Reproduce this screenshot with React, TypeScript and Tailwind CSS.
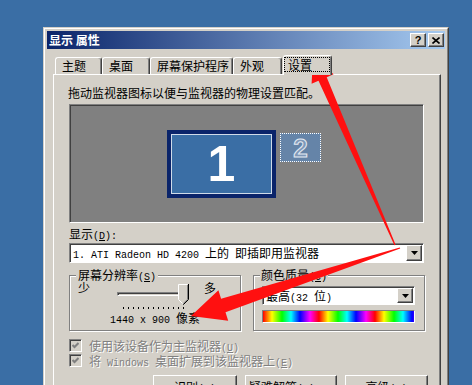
import type { ReactNode } from 'react';

const raised =
  'border border-t-white border-l-white border-r-[#404040] border-b-[#404040] shadow-[inset_-1px_-1px_0_#808080]';
const sunken =
  'border border-t-[#808080] border-l-[#808080] border-r-white border-b-white shadow-[inset_1px_1px_0_#404040]';
const etched =
  'border border-[#808080] shadow-[1px_1px_0_#fff,inset_1px_1px_0_#fff]';
const mono = "font-['Liberation_Mono',monospace] text-[10px] leading-[0]";
const disabledText = 'text-[#808080] [text-shadow:1px_1px_0_#fff]';

function L({ children }: { children: ReactNode }) {
  return <span className={mono}>{children}</span>;
}

function DownArrow() {
  return (
    <svg width="7" height="4" viewBox="0 0 7 4">
      <polygon points="0,0 7,0 3.5,4" fill="#000" />
    </svg>
  );
}

function Combo({
  className,
  children,
}: {
  className: string;
  children: ReactNode;
}) {
  return (
    <div className={`flex bg-white p-px ${sunken} ${className}`}>
      <div className="flex flex-1 items-center overflow-hidden whitespace-nowrap pl-[2px] leading-[12px]">
        <span>{children}</span>
      </div>
      <div
        className={`flex w-[16px] shrink-0 items-center justify-center bg-[#d4d0c8] ${raised}`}
      >
        <DownArrow />
      </div>
    </div>
  );
}

function Check({ children }: { children: ReactNode }) {
  return (
    <div className="flex h-[13px] items-center">
      <div
        className={`flex h-[13px] w-[13px] items-center justify-center bg-[#d4d0c8] ${sunken}`}
      >
        <svg width="7" height="7" viewBox="0 0 7 7">
          <polyline
            points="0.5,3 2.5,5 6.5,1"
            fill="none"
            stroke="#808080"
            strokeWidth="2"
          />
        </svg>
      </div>
      <span className={`ml-[7px] whitespace-nowrap leading-[12px] ${disabledText}`}>
        {children}
      </span>
    </div>
  );
}

function Button({ className, children }: { className: string; children: ReactNode }) {
  return (
    <div
      className={`flex h-[23px] items-center justify-center whitespace-nowrap bg-[#d4d0c8] leading-[12px] ${raised} ${className}`}
    >
      <span>{children}</span>
    </div>
  );
}

function Thumb() {
  return (
    <svg width="11" height="21" viewBox="0 0 11 21">
      <polygon points="0,0 10,0 10,15 5,20 0,15" fill="#d4d0c8" />
      <polyline points="0.5,15.5 0.5,0.5 9.5,0.5" fill="none" stroke="#fff" />
      <polyline points="0.5,15.5 5,20" fill="none" stroke="#fff" />
      <polyline points="9.5,1 9.5,15.3 5,19.8" fill="none" stroke="#808080" />
      <polyline points="10.5,0 10.5,15.5 5.3,20.7" fill="none" stroke="#000" />
    </svg>
  );
}

export default function App() {
  const tab =
    'flex h-[17px] items-center pl-[6px] rounded-t-[3px] border-t border-l border-r border-t-white border-l-white border-r-[#404040] shadow-[inset_-1px_0_0_#808080]';

  return (
    <div className="relative h-[385px] w-[472px] overflow-hidden bg-[#3a6ea5] font-['Noto_Sans_CJK_SC',sans-serif] text-[12px] leading-[12px] text-black">
      {/* window */}
      <div className="ml-[43px] mt-[27px] w-[406px] border border-t-[#d4d0c8] border-l-[#d4d0c8] border-r-[#404040] border-b-[#404040] bg-[#d4d0c8]">
        <div className="border border-t-white border-l-white border-r-[#808080] border-b-[#808080] p-[2px]">
          <div className="flex h-[18px] items-center justify-between bg-[linear-gradient(90deg,#0a246a,#a6caf0)] pl-[2px] pr-px">
            <span className="font-bold text-white">显示 属性</span>
            <div className="flex gap-[2px]">
              <div
                className={`flex h-[14px] w-[16px] items-center justify-center bg-[#d4d0c8] font-['Liberation_Sans',sans-serif] text-[11px] font-bold ${raised}`}
              >
                ?
              </div>
              <div
                className={`flex h-[14px] w-[16px] items-center justify-center bg-[#d4d0c8] ${raised}`}
              >
                <svg width="8" height="7" viewBox="0 0 8 7">
                  <path d="M0.5 0.5 L7.5 6.5 M7.5 0.5 L0.5 6.5" stroke="#000" strokeWidth="1.6" />
                </svg>
              </div>
            </div>
          </div>

          <div className="pl-[6px] pr-[4px] pt-[6px]">
            {/* tabs */}
            <div className="flex h-[19px] items-end pl-[2px]">
              <div className={`${tab} w-[47px]`}>主题</div>
              <div className={`${tab} w-[48px]`}>桌面</div>
              <div className={`${tab} w-[83px]`}>屏幕保护程序</div>
              <div className={`${tab} w-[49px]`}>外观</div>
              <div className="relative z-10 -mb-px ml-px h-[20px] w-[49px] rounded-t-[3px] border-t border-l border-r border-t-white border-l-white border-r-[#404040] bg-[#d4d0c8] shadow-[inset_-1px_0_0_#808080]">
                <div className="mt-px flex h-[15px] w-[46px] items-center border border-dotted border-black pl-[3px]">
                  设置
                </div>
              </div>
            </div>

            {/* panel */}
            <div className="h-[320px] border-t border-l border-r border-t-white border-l-white border-r-[#404040] pl-[15px] pr-[12px] pt-[12px] shadow-[inset_-1px_0_0_#808080]">
              <div className="-ml-px h-[12px] whitespace-nowrap">
                拖动监视器图标以便与监视器的物理设置匹配。
              </div>

              <div
                className={`mt-[5px] flex h-[119px] w-[355px] items-start bg-[#808080] pl-[97px] pt-[25px] ${sunken}`}
              >
                <div className="h-[68px] w-[109px] bg-[#0a246a] p-[4px]">
                  <div className="flex h-full items-center justify-center border border-[#cfdbe9] bg-[#3a6ea5] font-['Liberation_Sans',sans-serif] text-[50px] font-bold leading-none text-white">
                    1
                  </div>
                </div>
                <div className="ml-[4px] mt-[3px] flex h-[29px] w-[41px] items-center justify-center border border-dotted border-white bg-[#6584a8] font-['Liberation_Sans',sans-serif] text-[26px] font-bold leading-none text-[#7f98b8] [-webkit-text-stroke:1px_#e4eaf2]">
                  2
                </div>
              </div>

              <div className="mt-[5px] h-[12px]">
                显示<L>(<u>D</u>):</L>
              </div>
              <Combo className="mt-[3px] h-[20px] w-[355px]">
                <L>1. ATI Radeon HD 4200 </L>上的<L> </L>即插即用监视器
              </Combo>

              <div className="mt-[12px] flex w-[356px] gap-[12px]">
                <div className={`h-[56px] w-[172px] ${etched}`}>
                  <div className="-mt-[7px] ml-[6px] h-[12px] w-fit whitespace-nowrap bg-[#d4d0c8] px-[2px]">
                    屏幕分辨率<L>(<u>S</u>)</L>
                  </div>
                  <div className="mt-px flex h-[28px] items-start pl-[8px]">
                    <span>少</span>
                    <div className="relative ml-[27px] w-[72px]">
                      <div className={`mt-[10px] h-[4px] w-[68px] ${sunken}`} />
                      <div className="mt-[11px] flex gap-[4px] pl-[6px]">
                        {Array.from({ length: 13 }).map((_, i) => (
                          <div key={i} className="h-[2px] w-px bg-black" />
                        ))}
                      </div>
                      <div className="absolute left-[61px] top-[2px]">
                        <Thumb />
                      </div>
                    </div>
                    <span className="ml-[15px]">多</span>
                  </div>
                  <div className="mt-[2px] h-[12px] whitespace-nowrap text-center">
                    <L>1440 x 900 </L>像素
                  </div>
                </div>

                <div className={`h-[56px] w-[172px] ${etched}`}>
                  <div className="-mt-[7px] ml-[6px] h-[12px] w-fit whitespace-nowrap bg-[#d4d0c8] px-px">
                    颜色质量<L>(<u>C</u>)</L>
                  </div>
                  <Combo className="ml-[8px] mt-[5px] h-[19px] w-[153px]">
                    最高<L>(32 </L>位<L>)</L>
                  </Combo>
                  <div className="ml-[8px] mt-[5px] h-[13px] w-[153px] border border-t-[#808080] border-l-[#808080] border-r-white border-b-white bg-[repeating-linear-gradient(90deg,#ff0000_0px,#ffff00_9px,#00ff00_19px,#00ffff_28px,#0000ff_37px,#ff00ff_47px,#ff0000_56px)]" />
                </div>
              </div>

              <div className="mt-[8px] flex flex-col gap-[2px]">
                <Check>
                  使用该设备作为主监视器<L>(<u>U</u>)</L>
                </Check>
                <Check>
                  将<L> Windows </L>桌面扩展到该监视器上<L>(<u>E</u>)</L>
                </Check>
              </div>

              <div className="mt-[8px] flex justify-end gap-[8px]">
                <Button className="w-[84px]">
                  识别<L>(<u>I</u>)</L>
                </Button>
                <Button className="w-[92px]">
                  疑难解答<L>(<u>T</u>)...</L>
                </Button>
                <Button className="w-[83px]">
                  高级<L>(<u>V</u>)</L>
                </Button>
              </div>
            </div>
          </div>
        </div>
      </div>

      {/* annotation arrows */}
      <svg
        className="pointer-events-none absolute inset-0"
        width="472"
        height="385"
        viewBox="0 0 472 385"
      >
        <polygon
          points="394.4,245.2 318.5,80.8 311.6,83.8 313,57 333.6,74.2 326.7,77.2 395.6,244.8"
          fill="#ff1010"
        />
        <polygon
          points="399.8,247.4 221.1,298.8 218.4,290.3 191,316 228.2,320.7 225.5,312.2 400.2,248.6"
          fill="#ff1010"
        />
      </svg>
    </div>
  );
}
